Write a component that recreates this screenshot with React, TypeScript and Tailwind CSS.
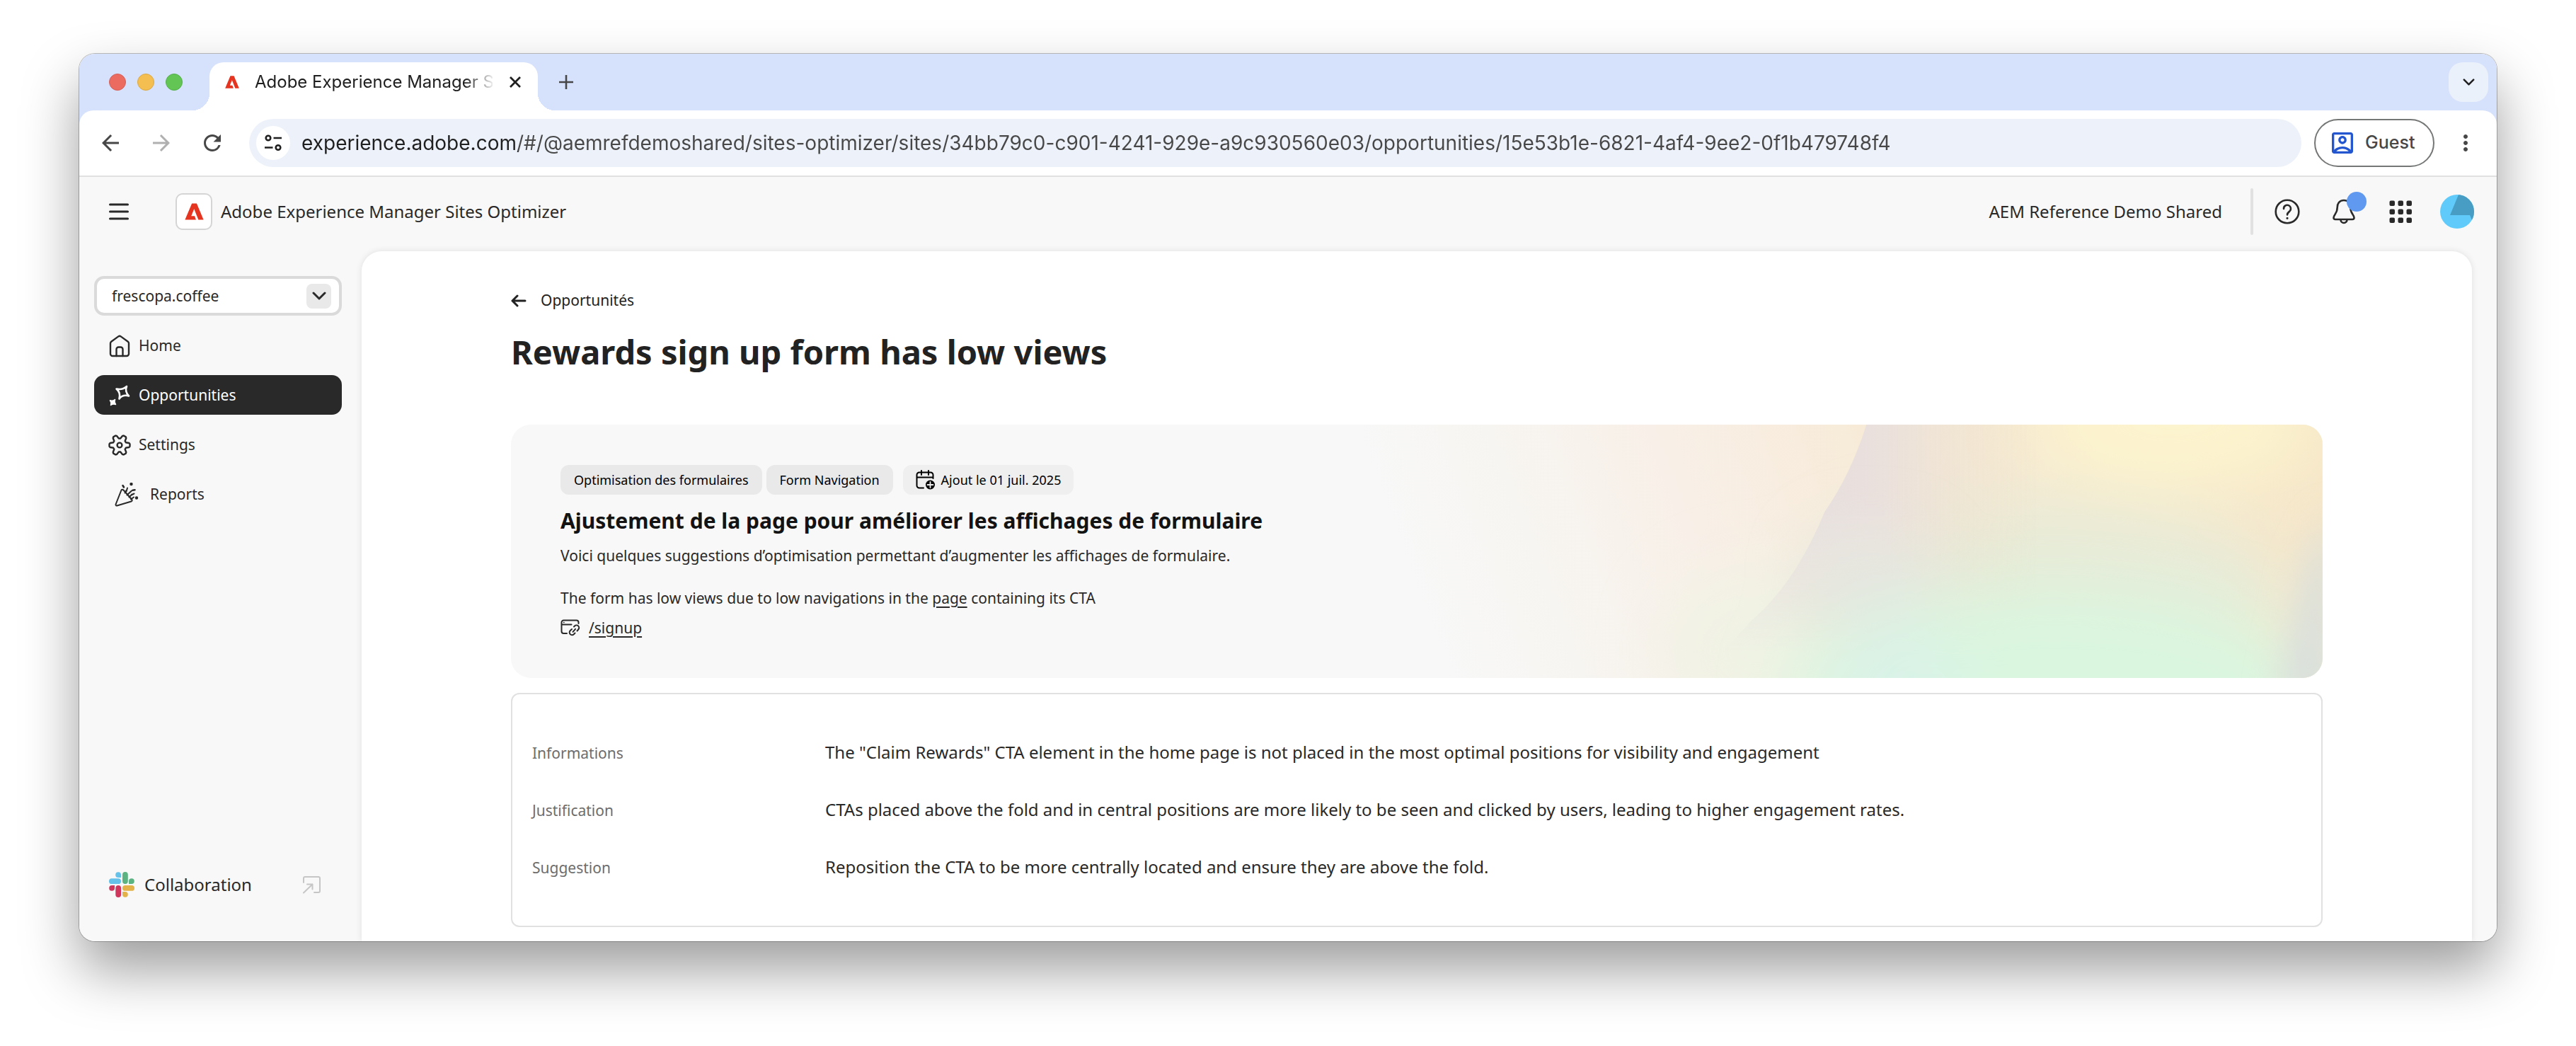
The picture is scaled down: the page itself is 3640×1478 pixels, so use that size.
import { useState, type ReactNode } from "react";
import {
  MdArrowBack,
  MdArrowForward,
  MdRefresh,
  MdOutlineAccountBox,
  MdMoreVert,
} from "react-icons/md";

const URL_TEXT =
  "experience.adobe.com/#/@aemrefdemoshared/sites-optimizer/sites/34bb79c0-c901-4241-929e-a9c930560e03/opportunities/15e53b1e-6821-4af4-9ee2-0f1b479748f4";

function AdobeMark({ className }: { className: string }) {
  return (
    <svg viewBox="0 0 24 22" className={className} aria-hidden="true">
      <path
        fill="#e5341f"
        d="M14.235 21.62l-1.742-4.85H8.117l3.678-9.258 5.579 14.109H24L15.155.38H8.909L0 21.62z"
      />
    </svg>
  );
}

function Chevron({ className }: { className: string }) {
  return (
    <svg viewBox="0 0 20 12" className={className} fill="none" stroke="currentColor" strokeWidth="3" strokeLinecap="round" strokeLinejoin="round" aria-hidden="true">
      <path d="M2 2l8 8 8-8" />
    </svg>
  );
}

function HomeIcon() {
  return (
    <svg viewBox="0 0 30 32" className="h-8 w-[30px]" fill="none" stroke="currentColor" strokeWidth="2.4" strokeLinejoin="round" strokeLinecap="round">
      <path d="M2 12.2a3 3 0 0 1 1.200-2.400L13.300 2.400a3 3 0 0 1 3.400 0l10.100 7.400a3 3 0 0 1 1.200 2.400V27a3 3 0 0 1-3 3H5a3 3 0 0 1-3-3z" />
      <path d="M10.500 30V20.500a3 3 0 0 1 3-3h3a3 3 0 0 1 3 3V30" />
    </svg>
  );
}

function SparkleIcon() {
  return (
    <svg viewBox="0 0 30 30" className="size-[30px]" fill="none" stroke="currentColor" strokeWidth="2.600" strokeLinejoin="round">
      <path d="M25 2Q22 9 28 15.500Q19.500 13 14.500 19.500Q17 11 10.500 5.500Q19 7.500 25 2z" />
      <path fill="currentColor" strokeWidth="1.500" d="M8.500 20.500Q7 24 9.500 27.500Q6 26 2.500 28.500Q4 25 1.500 21.800Q5 23 8.500 20.500z" />
    </svg>
  );
}

const gearPath = (() => {
  const steps: [number, number][] = [
    [-23, 9.6],
    [-13, 13.6],
    [-7, 14.6],
    [7, 14.6],
    [13, 13.6],
    [23, 9.6],
  ];
  const points: string[] = [];
  for (let k = 0; k < 6; k++) {
    for (const [offset, radius] of steps) {
      const a = ((k * 60 + offset) * Math.PI) / 180;
      points.push(`${(16 + radius * Math.cos(a)).toFixed(2)} ${(16 + radius * Math.sin(a)).toFixed(2)}`);
    }
  }
  return `M${points.join("L")}z`;
})();

function GearIcon() {
  return (
    <svg viewBox="0 0 32 32" className="-mx-px size-8" fill="none" stroke="currentColor" strokeWidth="2.400" strokeLinejoin="round">
      <path d={gearPath} />
      <circle cx="16" cy="16" r="3.400" />
    </svg>
  );
}

function PartyIcon() {
  return (
    <svg viewBox="0 0 34 34" className="size-[34px]" fill="none" stroke="currentColor" strokeWidth="2" strokeLinejoin="round" strokeLinecap="round">
      <path d="M9.500 10.500L1.600 30.500a1.500 1.500 0 0 0 1.800 2L23.500 26.500c1.500-.5 1.500-2 .500-3L12.500 10.500c-1-1-2.500-1-3 0z" />
      <path d="M14.500 14.500l2-3.500M17.500 17.500l6.500-6M18 7.500l-1.500 5M20.500 20.500l4-4M23 23.500l4-3M27.500 15.500l-4 2" />
      <path strokeWidth="2.600" d="M11.500 4l1.500 2.500M25.500 10.800l3-.5" />
      <circle cx="23.500" cy="2" r="1.200" fill="currentColor" />
      <circle cx="31" cy="21.500" r="1.200" fill="currentColor" />
    </svg>
  );
}

function SlackIcon() {
  return (
    <svg viewBox="0 0 36 36" className="size-9" aria-hidden="true">
      <g fill="#67c2ea">
        <rect x="0" y="9.300" width="17" height="7.800" rx="3.900" />
        <path d="M17 8V3.900a3.900 3.900 0 1 0-3.900 4.100z" />
      </g>
      <g fill="#5bb381">
        <rect x="19" y="0" width="7.800" height="17" rx="3.900" />
        <path d="M28 17V13.200a3.900 3.900 0 1 1 3.900 3.800z" />
      </g>
      <g fill="#cf375c">
        <rect x="9.300" y="19" width="7.800" height="17" rx="3.900" />
        <path d="M8 19V22.800a3.900 3.900 0 1 1-3.900-3.800z" />
      </g>
      <g fill="#e3b34a">
        <rect x="19" y="19" width="17" height="7.800" rx="3.900" />
        <path d="M19 28V32.100a3.900 3.900 0 1 0 3.900-4.100z" />
      </g>
    </svg>
  );
}

function LinkOutIcon() {
  return (
    <svg viewBox="0 0 25 25" className="size-[25px] text-[#c6c6c6]" fill="none" stroke="currentColor" strokeWidth="2" strokeLinecap="round" strokeLinejoin="round" aria-hidden="true">
      <path d="M1 9V3a2 2 0 0 1 2-2h19a2 2 0 0 1 2 2v18a2 2 0 0 1-2 2h-6" />
      <path d="M1 23.500L13.500 11.500M6 11.500h7.500v7" />
    </svg>
  );
}

function CalendarAddIcon() {
  return (
    <svg viewBox="0 0 28 28" className="size-7" fill="none" stroke="currentColor" strokeWidth="2" strokeLinecap="round" aria-hidden="true">
      <path d="M11 25.500H5A3.500 3.500 0 0 1 1.500 22V7A3.500 3.500 0 0 1 5 3.500h16A3.500 3.500 0 0 1 24.500 7v5M1.500 10.500h23M8 1v6M18 1v6" />
      <circle cx="20.500" cy="21" r="6.500" fill="currentColor" stroke="none" />
      <path stroke="#efefef" strokeWidth="1.800" d="M20.500 17v8M16.500 21h8" />
    </svg>
  );
}

function PageLinkIcon() {
  return (
    <svg viewBox="0 0 28 24" className="h-6 w-7" fill="none" stroke="currentColor" strokeWidth="2" strokeLinecap="round" aria-hidden="true">
      <path d="M9 20H4.500A3 3 0 0 1 1.500 17V4.500a3 3 0 0 1 3-3h18a3 3 0 0 1 3 3V6M1.500 7.500h14" />
      <path strokeWidth="1.500" d="M4.500 4.500h.5" />
      <path d="M19 10.500l1-1a3.600 3.600 0 0 1 5.200 5L23.500 16.500M16 14l-2.200 2a3.600 3.600 0 0 0 5 5.200L20.500 19.500M17.500 17.800l3.500-4" />
    </svg>
  );
}

function BannerArt() {
  return (
    <svg viewBox="0 0 1360 358" preserveAspectRatio="none" className="absolute inset-y-0 right-0 h-full w-[53%]" aria-hidden="true">
      <defs>
        <linearGradient id="base" x1="0" x2="1" y1="0.1" y2="0">
          <stop offset="0" stopColor="#f8f8f8" />
          <stop offset="0.140" stopColor="#f7f5f1" />
          <stop offset="0.320" stopColor="#f8efe7" />
          <stop offset="0.520" stopColor="#f7ebd8" />
          <stop offset="1" stopColor="#f5e6c8" />
        </linearGradient>
        <linearGradient id="mauve" x1="0" x2="1" y1="0" y2="0">
          <stop offset="0" stopColor="#e2dee2" />
          <stop offset="0.300" stopColor="#eae0dc" />
          <stop offset="0.550" stopColor="#efe3c9" stopOpacity="0" />
        </linearGradient>
        <linearGradient id="fade" x1="0" x2="0" y1="0" y2="1">
          <stop offset="0.350" stopColor="#fff" />
          <stop offset="0.900" stopColor="#000" />
        </linearGradient>
        <mask id="fadeMask" maskUnits="userSpaceOnUse" x="0" y="0" width="1360" height="358">
          <rect width="1360" height="358" fill="url(#fade)" />
        </mask>
        <filter id="soft" filterUnits="userSpaceOnUse" x="-200" y="-300" width="1800" height="1000">
          <feGaussianBlur stdDeviation="45" />
        </filter>
        <filter id="edge" filterUnits="userSpaceOnUse" x="1000" y="0" width="600" height="600">
          <feGaussianBlur stdDeviation="24" />
        </filter>
      </defs>
      <rect width="1360" height="358" fill="url(#base)" />
      <g filter="url(#soft)">
        <ellipse cx="560" cy="320" rx="130" ry="110" fill="#f0f3e4" />
        <ellipse cx="960" cy="240" rx="340" ry="130" fill="#e7ebd8" />
        <ellipse cx="1150" cy="0" rx="200" ry="90" fill="#fdf4ce" />
      </g>
      <path d="M714 0Q692 70 655 123Q613 225 550 278Q500 335 470 358H1360V0z" fill="url(#mauve)" mask="url(#fadeMask)" />
      <g filter="url(#soft)">
        <ellipse cx="720" cy="220" rx="80" ry="60" fill="#e5e6e1" />
        <ellipse cx="980" cy="375" rx="380" ry="140" fill="#daf6df" />
        <ellipse cx="760" cy="380" rx="90" ry="80" fill="#d9f2e9" />
      </g>
      <path d="M1335 200L1375 120V390H1295z" fill="#d9dfdc" filter="url(#edge)" />
    </svg>
  );
}

function NavItem({ icon, label, active = false, className = "gap-3 pl-[21px]" }: { icon: ReactNode; label: string; active?: boolean; className?: string }) {
  return (
    <li>
      <a
        href="#"
        aria-current={active ? "page" : undefined}
        className={`flex h-14 items-center rounded-[14px] pt-px text-[21px] ${className} ${active ? "bg-[#292929] text-white" : "text-[#292929]"}`}
      >
        {icon}
        {label}
      </a>
    </li>
  );
}

function TabStrip() {
  return (
    <div className="flex h-20 items-end bg-[#d6e1fc] pl-[42px]">
      <div className="flex h-[68px] items-start gap-4 pt-4">
        <button aria-label="Close window" className="size-6 rounded-full border border-[#d65f55] bg-[#ec6b60]" />
        <button aria-label="Minimise window" className="size-6 rounded-full border border-[#dba842] bg-[#f4bf50]" />
        <button aria-label="Zoom window" className="size-6 rounded-full border border-[#54ae49] bg-[#62c554]" />
      </div>
      <div className="relative ml-[38px] flex h-[68px] w-[464px] items-start rounded-t-[20px] bg-white">
        <span className="absolute right-full bottom-0 size-6 bg-[radial-gradient(circle_at_0_0,transparent_24px,#fff_24px)]" />
        <span className="absolute bottom-0 left-full size-6 bg-[radial-gradient(circle_at_100%_0,transparent_24px,#fff_24px)]" />
        <div className="flex h-14 w-full items-center pl-[22px]">
          <AdobeMark className="h-[18px] w-5" />
          <span className="ml-[22px] w-[336px] overflow-hidden text-[24px] whitespace-nowrap text-[#1f1f1f] [font-family:Inter,sans-serif] [mask-image:linear-gradient(to_right,#000_296px,transparent_340px)]">
            Adobe Experience Manager Sites Optimizer
          </span>
          <button aria-label="Close tab" className="ml-[18px] flex size-7 items-center justify-center text-[#1f1f1f]">
            <svg viewBox="0 0 16 16" className="size-4" stroke="currentColor" strokeWidth="2.800">
              <path d="M1 1l14 14M15 1L1 15" />
            </svg>
          </button>
        </div>
      </div>
      <button aria-label="New tab" className="mb-3 ml-[26px] flex h-14 w-7 items-center justify-center text-[#474747]">
        <svg viewBox="0 0 20 20" className="size-5" stroke="currentColor" strokeWidth="2.600">
          <path d="M10 0v20M0 10h20" />
        </svg>
      </button>
      <button aria-label="Search tabs" className="mr-3 mb-3 ml-auto flex size-14 items-center justify-center rounded-[20px] bg-[#ebf1fb] text-[#1f1f1f]">
        <Chevron className="h-[10px] w-[17px]" />
      </button>
    </div>
  );
}

function Toolbar() {
  const [url, setUrl] = useState(URL_TEXT);
  return (
    <div className="bg-[#d6e1fc]">
      <div className="flex h-[94px] items-center rounded-t-[20px] border-b-2 border-[#e1e1e1] bg-white px-[26px] text-[#474747]">
        <div className="flex gap-9">
          <button aria-label="Back"><MdArrowBack className="size-9" /></button>
          <button aria-label="Forward" className="text-[#b0b0b0]"><MdArrowForward className="size-9" /></button>
          <button aria-label="Reload"><MdRefresh className="size-9" /></button>
        </div>
        <div className="ml-[34px] flex h-[68px] min-w-0 flex-1 items-center rounded-full bg-[#edf2fa] pr-8 pl-[10px]">
          <button aria-label="View site information" className="flex size-12 shrink-0 items-center justify-center rounded-full bg-white text-[#1f1f1f]">
            <svg viewBox="0 0 24 24" className="size-6" fill="none" stroke="currentColor" strokeWidth="2.600">
              <circle cx="5" cy="5" r="3.300" />
              <path d="M12.500 5H24M0 18.500h11.500" />
              <circle cx="19" cy="18.500" r="3.300" />
            </svg>
          </button>
          <input
            aria-label="Address"
            value={url}
            onChange={(e) => setUrl(e.target.value)}
            className="ml-4 min-w-0 flex-1 bg-[linear-gradient(to_right,#1f1f1f_306px,#474747_306px)] bg-clip-text text-[28px] text-[#474747] outline-none [-webkit-text-fill-color:transparent] [font-family:Inter,sans-serif]"
          />
        </div>
        <button className="ml-[18px] flex h-[68px] w-[170px] items-center rounded-full border-2 border-[#747775] pl-[18px] text-[25px] font-medium [font-family:Inter,sans-serif]">
          <MdOutlineAccountBox className="size-10 text-[#2457cf]" />
          <span className="ml-3">Guest</span>
        </button>
        <button aria-label="Menu" className="ml-[26px]"><MdMoreVert className="size-9" /></button>
      </div>
    </div>
  );
}

function AppHeader() {
  return (
    <header className="flex h-[98px] items-center pr-8 pl-[42px] text-[24px] text-[#292929]">
      <button aria-label="Toggle navigation">
        <svg viewBox="0 0 28 24" className="h-6 w-7" stroke="currentColor" strokeWidth="3" strokeLinecap="round">
          <path d="M1.500 2h25M1.500 12h25M1.500 22h25" />
        </svg>
      </button>
      <a href="#" className="ml-[66px] flex items-center gap-3">
        <span className="flex size-[52px] items-center justify-center rounded-[10px] border-2 border-[#d5d5d5] bg-white">
          <AdobeMark className="h-6 w-[27px]" />
        </span>
        Adobe Experience Manager Sites Optimizer
      </a>
      <span className="ml-auto">AEM Reference Demo Shared</span>
      <span className="ml-10 h-[66px] w-1 rounded-full bg-[#e1e1e1]" />
      <div className="ml-6 flex items-center gap-8">
        <button aria-label="Help" className="flex size-12 items-center justify-center">
          <svg viewBox="0 0 36 36" className="size-9" fill="none" stroke="currentColor" strokeWidth="2.600" strokeLinecap="round">
            <circle cx="18" cy="18" r="16.300" />
            <path d="M13 14a5 5 0 1 1 8.300 3.500c-1.800 1.500-3.300 2.500-3.300 5" />
            <circle cx="18" cy="27.300" r="0.800" fill="currentColor" strokeWidth="1.600" />
          </svg>
        </button>
        <button aria-label="Notifications" className="relative flex size-12 items-center justify-center">
          <svg viewBox="0 0 32 36" className="h-9 w-8" fill="none" stroke="currentColor" strokeWidth="2.600" strokeLinejoin="round">
            <path d="M16 2C10.500 2 6.800 6 6.800 11.500c0 4.500-.8 7-3.300 10.500-2.500 3.500-3 7 .5 7h24c3.500 0 3-3.500.5-7-2.500-3.500-3.300-6-3.300-10.500C25.200 6 21.500 2 16 2z" />
            <path d="M11.500 29.500a4.500 4.500 0 0 0 9 0" />
          </svg>
          <span className="absolute -top-1 -right-2 size-7 rounded-full bg-[#5f99f0]" />
        </button>
        <button aria-label="Apps" className="flex size-12 items-center justify-center">
          <svg viewBox="0 0 32 32" className="size-8" fill="currentColor">
            {[0, 12, 24].map((y) =>
              [0, 12, 24].map((x) => <rect key={`${x}-${y}`} x={x + 0.5} y={y + 0.5} width="7.500" height="7.500" rx="2" />)
            )}
          </svg>
        </button>
        <button aria-label="Account" className="size-12 overflow-hidden rounded-full">
          <svg viewBox="0 0 48 48" className="size-12">
            <rect width="48" height="48" fill="#60cbfa" />
            <path d="M26 0H48V36H45L42 29H14z" fill="#479dc4" />
          </svg>
        </button>
      </div>
    </header>
  );
}

function Sidebar() {
  return (
    <aside className="flex w-[399px] shrink-0 flex-col pt-[35px] pr-7 pb-[62px] pl-[21px] text-[#292929]">
      <div className="relative flex items-center">
        <select aria-label="Site" className="h-14 w-full appearance-none rounded-[14px] border-4 border-[#dadada] bg-white pt-px pl-[21px] text-[21px]">
          <option>frescopa.coffee</option>
        </select>
        <span className="pointer-events-none absolute right-[15px] flex size-[35px] items-center justify-center rounded-lg bg-[#e9e9e9]">
          <Chevron className="h-3 w-5" />
        </span>
      </div>
      <nav className="mt-[14px]">
        <ul className="flex flex-col gap-[14px]">
          <NavItem icon={<HomeIcon />} label="Home" />
          <NavItem icon={<SparkleIcon />} label="Opportunities" active />
          <NavItem icon={<GearIcon />} label="Settings" />
          <NavItem icon={<PartyIcon />} label="Reports" className="gap-4 pl-[29px]" />
        </ul>
      </nav>
      <a href="#" className="mt-auto flex h-9 items-center pr-[30px] pl-[21px] text-[24px]">
        <SlackIcon />
        <span className="mr-auto ml-[14px]">Collaboration</span>
        <LinkOutIcon />
      </a>
    </aside>
  );
}

const details = [
  {
    term: "Informations",
    text: 'The "Claim Rewards" CTA element in the home page is not placed in the most optimal positions for visibility and engagement',
  },
  {
    term: "Justification",
    text: "CTAs placed above the fold and in central positions are more likely to be seen and clicked by users, leading to higher engagement rates.",
  },
  {
    term: "Suggestion",
    text: "Reposition the CTA to be more centrally located and ensure they are above the fold.",
  },
];

function Content() {
  return (
    <main className="mr-[35px] min-w-0 flex-1 rounded-t-[28px] bg-white px-[120px] pt-[54px] pb-5 shadow-[0_0_10px_rgba(0,0,0,0.1)]">
      <div className="mx-auto w-full max-w-[2560px]">
        <a href="#" className="flex h-8 w-fit items-center text-[21px] text-[#222]">
          <svg viewBox="0 0 22 18" className="h-[18px] w-[22px]" fill="none" stroke="currentColor" strokeWidth="3" strokeLinecap="round" strokeLinejoin="round">
            <path d="M9 2L2 9l7 7M2 9h18" />
          </svg>
          <span className="ml-5">Opportunités</span>
        </a>
        <h1 className="mt-[26px] text-[47px] leading-[60px] font-bold text-[#222]">Rewards sign up form has low views</h1>

        <section className="relative mt-[73px] overflow-hidden rounded-[28px] bg-[#f8f8f8] px-[70px] pt-[57px] pb-[55px] text-[#292929]">
          <BannerArt />
          <div className="relative">
            <div className="flex text-[18px] text-black">
              <span className="flex h-[42px] items-center rounded-xl bg-[#e9e9e9] px-[19px]">Optimisation des formulaires</span>
              <span className="ml-[6px] flex h-[42px] items-center rounded-xl bg-[#e9e9e9] px-[19px]">Form Navigation</span>
              <span className="ml-[14px] flex h-[42px] items-center gap-2 rounded-xl bg-[#efefef] px-[18px]">
                <CalendarAddIcon />
                Ajout le 01 juil. 2025
              </span>
            </div>
            <h2 className="mt-[17px] text-[30px] leading-10 font-bold text-[#131313]">
              Ajustement de la page pour améliorer les affichages de formulaire
            </h2>
            <p className="mt-[13px] text-[21px] leading-8">
              Voici quelques suggestions d’optimisation permettant d’augmenter les affichages de formulaire.
            </p>
            <p className="mt-7 text-[21px] leading-8">
              The form has low views due to low navigations in the <a href="#" className="underline decoration-2 underline-offset-4">page</a> containing its CTA
            </p>
            <div className="mt-[10px] flex items-center text-[21px] leading-8">
              <PageLinkIcon />
              <a href="#" className="ml-3 underline decoration-2 underline-offset-4">/signup</a>
            </div>
          </div>
        </section>

        <dl className="mt-[21px] flex flex-col gap-11 rounded-xl border-2 border-[#e1e1e1] px-7 pt-16 pb-16">
          {details.map((d) => (
            <div key={d.term} className="flex items-baseline leading-9">
              <dt className="w-[414px] shrink-0 text-[21px] text-[#6d6d6d]">{d.term}</dt>
              <dd className="text-[24px] text-[#292929]">{d.text}</dd>
            </div>
          ))}
        </dl>
      </div>
    </main>
  );
}

export default function App() {
  return (
    <div className="flex min-h-screen flex-col bg-white px-28 pt-[76px] pb-[148px] [font-family:'Noto_Sans',sans-serif]">
      <div className="flex flex-1 flex-col rounded-[22px] shadow-[0_0_0_1px_rgba(0,0,0,0.25),0_40px_80px_rgba(0,0,0,0.39)]">
        <div className="flex flex-1 flex-col overflow-hidden rounded-[22px] bg-[#f8f8f8]">
          <TabStrip />
          <Toolbar />
          <AppHeader />
          <div className="flex flex-1 pt-[7px]">
            <Sidebar />
            <Content />
          </div>
        </div>
      </div>
    </div>
  );
}
